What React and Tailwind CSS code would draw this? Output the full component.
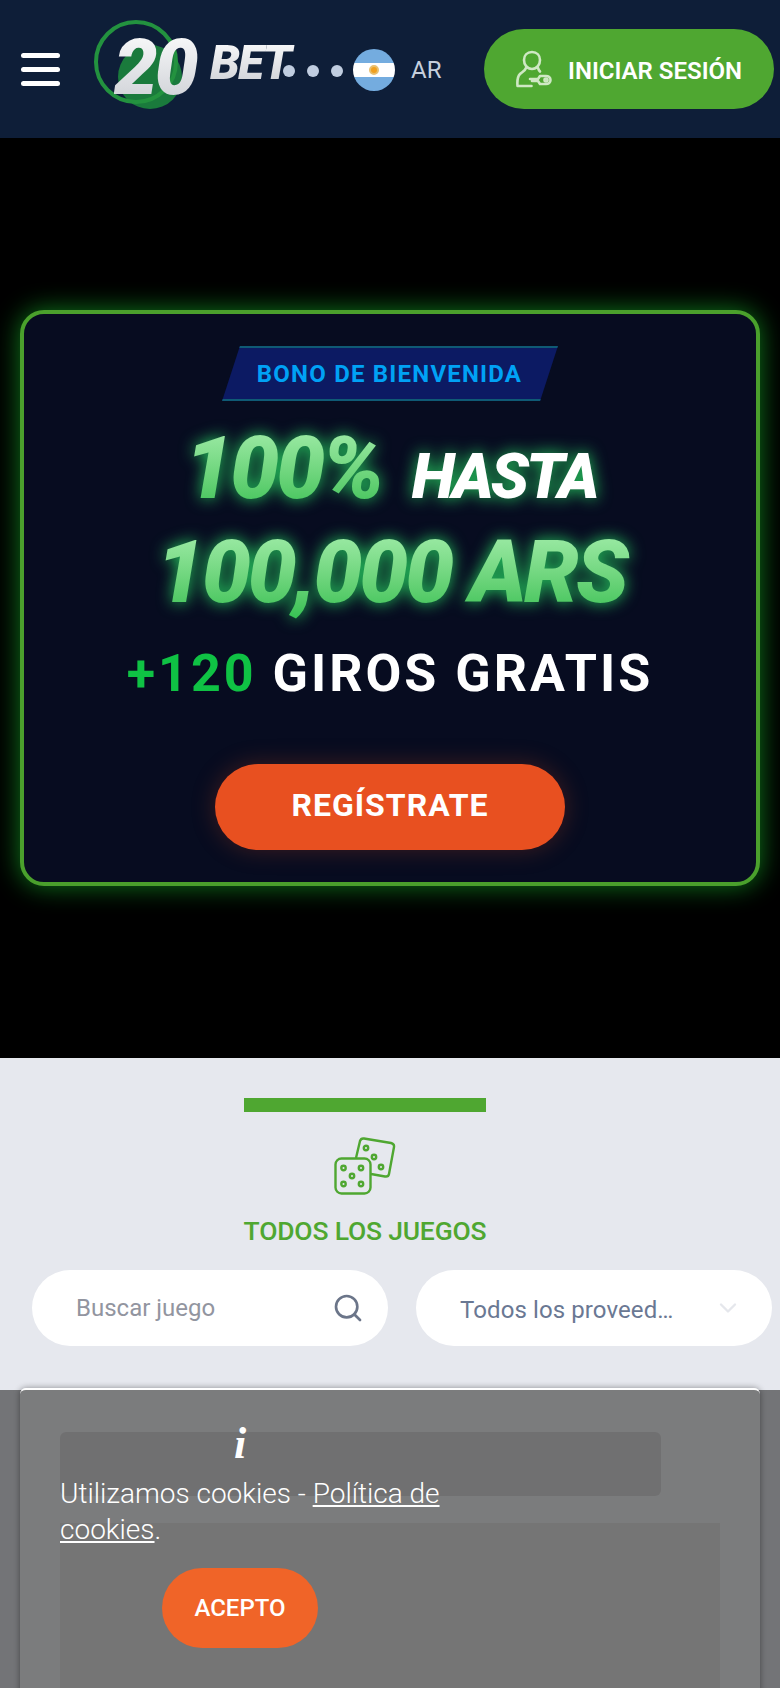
import { Search, ChevronDown } from "lucide-react";

function Logo() {
  return (
    <div className="relative w-[205px] h-[100px] shrink-0">
      <svg className="absolute left-0 top-0" width="100" height="100" viewBox="0 0 100 100" fill="none">
        <circle cx="62" cy="62" r="32" fill="#1a7a3c" />
        <circle cx="48" cy="47" r="40" stroke="#23923f" strokeWidth="4" />
      </svg>
      <div className="absolute left-[26px] top-[8px] text-[78px] leading-[90px] font-black italic tracking-[-3px] text-transparent bg-clip-text bg-gradient-to-b from-white to-[#c9ccd2] pr-2">
        20
      </div>
      <div className="absolute left-[122px] top-[20px] text-[48px] leading-[56px] font-black italic tracking-[-2px] text-transparent bg-clip-text bg-gradient-to-b from-white to-[#c9ccd2] pr-2">
        BET
      </div>
    </div>
  );
}

function LoginIcon() {
  return (
    <svg width="36" height="38" viewBox="0 0 36 38" fill="none" stroke="#cfe8c4" strokeWidth="2.6" strokeLinecap="round" strokeLinejoin="round">
      <path d="M16 2c5 0 8 3.500 8 8s-3 9-8 9-8-4.500-8-9 3-8 8-8z" />
      <path d="M10 18c-1 3-4 4-6 6-2.500 2.500-3 6-2.500 12h14" />
      <path d="M22 18c.5 1.500 1 2.500 2 3.500" />
      <path d="M14 29h8l2-3h6c2.500 0 4.500 1.500 4.500 4s-2 4-4.500 4h-6l-2-3h-6" />
      <circle cx="30" cy="30" r="1.500" />
    </svg>
  );
}

function DiceIcon() {
  return (
    <svg width="62" height="58" viewBox="0 0 62 58" fill="none" stroke="#4fa731" strokeWidth="2.400">
      <path d="M22 21l4-17q1-3 4-2.500l27 4.500q3.500 1 3 4l-5 27q-.5 3-4 2.500l-14-2.500" />
      <circle cx="32" cy="11" r="2.200" />
      <circle cx="40" cy="20" r="2.200" />
      <circle cx="47" cy="30" r="2.200" />
      <rect x="1.500" y="21.500" width="35" height="35" rx="6" />
      <circle cx="9.500" cy="31" r="2.200" />
      <circle cx="27" cy="31" r="2.200" />
      <circle cx="18" cy="39" r="2.200" />
      <circle cx="9.500" cy="47" r="2.200" />
      <circle cx="27" cy="47" r="2.200" />
    </svg>
  );
}

export default function App() {
  return (
    <div className="relative h-[1688px] overflow-hidden bg-[#e6e8ee] font-[Roboto,sans-serif]">
      {/* header */}
      <header className="h-[138px] bg-[#0e1e38] flex items-center pl-[21px]">
        <div className="w-[39px] flex flex-col gap-[9px] shrink-0">
          <span className="h-[5px] bg-white rounded-sm" />
          <span className="h-[5px] bg-white rounded-sm" />
          <span className="h-[5px] bg-white rounded-sm" />
        </div>
        <div className="ml-[28px] -mt-[8px]">
          <Logo />
        </div>
        <div className="flex items-center gap-3 -ml-[10px] mt-[4px]">
          <span className="w-3 h-3 rounded-full bg-[#c0cde0]" />
          <span className="w-3 h-3 rounded-full bg-[#c0cde0]" />
          <span className="w-3 h-3 rounded-full bg-[#c0cde0]" />
        </div>
        <div className="ml-[10px] w-[42px] h-[42px] rounded-full overflow-hidden flex flex-col shrink-0 mt-[2px]">
          <span className="h-[14px] bg-[#74acdf]" />
          <span className="h-[14px] bg-white flex items-center justify-center">
            <span className="w-[10px] h-[10px] rounded-full bg-[#f0a020] border-2 border-[#e8c070]" />
          </span>
          <span className="h-[14px] bg-[#74acdf]" />
        </div>
        <span className="ml-4 text-[24px] text-[#c5cfdd] mt-[1px]">AR</span>
        <button className="ml-auto mr-[6px] w-[290px] h-[80px] rounded-full bg-[#4fa731] flex items-center pl-[32px] shrink-0">
          <LoginIcon />
          <span className="ml-[16px] mt-[4px] text-[24px] font-semibold text-white whitespace-nowrap">INICIAR SESIÓN</span>
        </button>
      </header>

      {/* hero */}
      <section className="h-[920px] bg-black flex items-center px-5">
        <div className="w-full h-[576px] rounded-[24px] border-4 border-[#4aa02c] bg-[#070c20] shadow-[0_0_26px_#0f7a1c] flex flex-col items-center pt-[32px]">
          <div className="w-[318px] h-[55px] -skew-x-[18deg] bg-[#0c1a63] border-y-2 border-[#0f5a75] flex items-center justify-center">
            <span className="skew-x-[18deg] text-[24px] font-bold tracking-[1.200px] text-[#00a2f5] whitespace-nowrap">BONO DE BIENVENIDA</span>
          </div>
          <div className="mt-[17px] ml-[1px] h-[100px] flex items-baseline gap-[22px] italic font-black leading-[100px] drop-shadow-[0_0_8px_#25c95e]">
            <span className="text-[87px] tracking-[-3px] pr-2 text-transparent bg-clip-text bg-gradient-to-b from-[#a8f0b0] to-[#2fbf50]">100%</span>
            <span className="text-[63px] tracking-[-3px] text-white">HASTA</span>
          </div>
          <div className="mt-[4px] ml-[10px] h-[100px] text-[87px] leading-[100px] italic font-black tracking-[-3px] pr-2 whitespace-nowrap text-transparent bg-clip-text bg-gradient-to-b from-[#a8f0b0] to-[#2fbf50] drop-shadow-[0_0_8px_#25c95e]">
            100,000 ARS
          </div>
          <div className="mt-[22px] text-[52px] leading-[60px] font-bold tracking-[3px] text-white whitespace-nowrap">
            <span className="text-[#0fc244]">+120</span> GIROS GRATIS
          </div>
          <button className="mt-[60px] w-[350px] h-[86px] rounded-full bg-[#e85020] text-[32px] font-bold tracking-[1px] text-white pb-1 shadow-[0_0_24px_rgba(232,80,32,0.25)]">
            REGÍSTRATE
          </button>
        </div>
      </section>

      {/* games */}
      <section className="pt-[40px]">
        <div className="ml-[244px] w-[242px] flex flex-col items-center">
          <div className="w-full h-[14px] bg-[#4fa731]" />
          <div className="mt-[25px] w-[62px]">
            <DiceIcon />
          </div>
          <h2 className="mt-[21px] text-[26.500px] leading-[30px] font-medium tracking-[-0.2px] text-[#4fa731] whitespace-nowrap">TODOS LOS JUEGOS</h2>
        </div>
        <div className="mt-[24px] ml-[32px] flex gap-[28px]">
          <div className="w-[356px] h-[76px] rounded-full bg-white flex items-center pl-[44px] pr-[24px]">
            <span className="text-[24px] text-[#9295a0]">Buscar juego</span>
            <Search className="ml-auto text-[#6b7589]" size={32} strokeWidth={2} />
          </div>
          <div className="w-[356px] h-[76px] rounded-full bg-white flex items-center pl-[44px] pr-[30px]">
            <span className="text-[24px] tracking-[0.1px] text-[#6a7893] mt-[3px]">Todos los proveed…</span>
            <ChevronDown className="ml-auto text-[#e5e7ec]" size={28} strokeWidth={2} />
          </div>
        </div>
        <div className="mt-[86px] ml-[60px] w-[601px] h-[64px] rounded-md bg-[#bababc]" />
        <div className="mt-[27px] ml-[60px] w-[660px] h-[300px] bg-[#cecece]" />
      </section>

      {/* cookie overlay */}
      <div className="absolute left-0 right-0 top-[1390px] bottom-0 bg-black/50">
        <div className="mx-5 -mt-[2px] h-[320px] rounded-t-md border-t-2 border-white bg-[#838383]/50 shadow-[0_0_6px_rgba(0,0,0,0.4)] pl-[40px] pt-[32px]">
          <div className="w-[360px] flex flex-col items-center">
            <span className="h-[44px] text-[44px] leading-[44px] font-bold italic text-white font-[Liberation_Serif,serif]">i</span>
            <p className="mt-[10px] w-[400px] self-start text-[28px] leading-[36px] font-light text-white">
              Utilizamos cookies - <a className="underline">Política de</a>
              <br />
              <a className="underline">cookies</a>.
            </p>
            <button className="mt-[20px] w-[156px] h-[80px] rounded-full bg-[#f06428] text-[24px] font-medium text-white">ACEPTO</button>
          </div>
        </div>
      </div>
    </div>
  );
}
